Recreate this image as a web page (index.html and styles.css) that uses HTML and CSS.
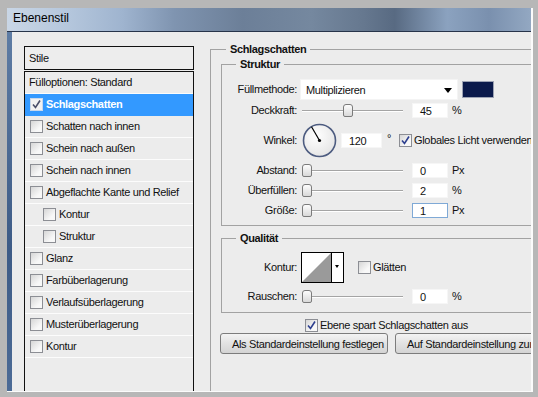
FILE: index.html
```html
<!DOCTYPE html>
<html lang="de">
<head>
  <meta charset="UTF-8" />
  <title>Ebenenstil</title>
  <link rel="stylesheet" href="styles.css">
</head>
<body>
<div class="fenster">
  <div class="titel">Ebenenstil</div>
  <div class="rahmen">
    <div class="inhalt">

      <div class="stile">
        <div class="stile-kopf">Stile</div>
        <ul class="stile-liste">
          <li class="ohne">Fülloptionen: Standard</li>
          <li class="aktiv"><span class="cb"><svg width="11" height="11" viewBox="0 0 11 11"><path d="M2 5.5 L4.5 8.5 L9 1.5" fill="none" stroke="#4a4f6a" stroke-width="1.6"/></svg></span>Schlagschatten</li>
          <li><span class="cb"></span>Schatten nach innen</li>
          <li><span class="cb"></span>Schein nach außen</li>
          <li><span class="cb"></span>Schein nach innen</li>
          <li><span class="cb"></span>Abgeflachte Kante und Relief</li>
          <li class="unter"><span class="cb"></span>Kontur</li>
          <li class="unter"><span class="cb"></span>Struktur</li>
          <li><span class="cb"></span>Glanz</li>
          <li><span class="cb"></span>Farbüberlagerung</li>
          <li><span class="cb"></span>Verlaufsüberlagerung</li>
          <li><span class="cb"></span>Musterüberlagerung</li>
          <li><span class="cb"></span>Kontur</li>
        </ul>
      </div>

      <div class="optionen">
        <fieldset class="gruppe">
          <legend>Schlagschatten</legend>

          <fieldset class="block struktur">
            <legend>Struktur</legend>

            <div class="zeile z1">
              <label>Füllmethode:</label>
              <div class="auswahl">Multiplizieren<span class="pfeil"></span></div>
              <span class="farbe"></span>
            </div>

            <div class="zeile z2">
              <label>Deckkraft:</label>
              <div class="regler"><span class="knopf" style="left: 41px"></span></div>
              <span class="feld">45</span>
              <span class="einheit">%</span>
            </div>

            <div class="zeile z3">
              <label>Winkel:</label>
              <svg class="rad" width="35" height="35" viewBox="0 0 35 35">
                <defs>
                  <radialGradient id="radfuell" cx="0.4" cy="0.35" r="0.7">
                    <stop offset="0" stop-color="#ffffff"/>
                    <stop offset="1" stop-color="#e4e4e4"/>
                  </radialGradient>
                </defs>
                <circle cx="17.5" cy="17.5" r="16" fill="url(#radfuell)" stroke="#4d5c80" stroke-width="1.6"/>
                <line x1="17.5" y1="17.5" x2="9.5" y2="3.8" stroke="#000" stroke-width="1.2"/>
                <circle cx="17.5" cy="17.5" r="1.6" fill="#000"/>
              </svg>
              <span class="feld breit">120</span>
              <span class="grad">°</span>
              <span class="cb"><svg width="11" height="11" viewBox="0 0 11 11"><path d="M2 5.5 L4.5 8.5 L9 1.5" fill="none" stroke="#2d3f8f" stroke-width="1.6"/></svg></span>
              <span class="cb-text">Globales Licht verwenden</span>
            </div>

            <div class="zeile z4">
              <label>Abstand:</label>
              <div class="regler"><span class="knopf" style="left: 0px"></span></div>
              <span class="feld">0</span>
              <span class="einheit">Px</span>
            </div>

            <div class="zeile z4">
              <label>Überfüllen:</label>
              <div class="regler"><span class="knopf" style="left: 0px"></span></div>
              <span class="feld">2</span>
              <span class="einheit">%</span>
            </div>

            <div class="zeile z4">
              <label>Größe:</label>
              <div class="regler"><span class="knopf" style="left: 0px"></span></div>
              <span class="feld fokus">1</span>
              <span class="einheit">Px</span>
            </div>
          </fieldset>

          <fieldset class="block qualitaet">
            <legend>Qualität</legend>

            <div class="zeile k1">
              <label>Kontur:</label>
              <div class="kontur">
                <svg width="29" height="29" viewBox="0 0 29 29">
                  <rect width="29" height="29" fill="#fff"/>
                  <polygon points="0,29 29,0 29,29" fill="#9a9a9a"/>
                </svg>
                <span class="kontur-pfeil"></span>
              </div>
              <span class="cb"></span>
              <span class="cb-text">Glätten</span>
            </div>

            <div class="zeile k2">
              <label>Rauschen:</label>
              <div class="regler"><span class="knopf" style="left: 0px"></span></div>
              <span class="feld">0</span>
              <span class="einheit">%</span>
            </div>
          </fieldset>

          <div class="aussparen">
            <span class="cb"><svg width="11" height="11" viewBox="0 0 11 11"><path d="M2 5.5 L4.5 8.5 L9 1.5" fill="none" stroke="#2d3f8f" stroke-width="1.6"/></svg></span>
            <span class="cb-text">Ebene spart Schlagschatten aus</span>
          </div>

          <div class="knoepfe">
            <button type="button">Als Standardeinstellung festlegen</button>
            <button type="button">Auf Standardeinstellung zurücksetzen</button>
          </div>
        </fieldset>
      </div>

    </div>
  </div>
</div>
</body>
</html>
```

FILE: styles.css
```css
html, body { margin: 0; padding: 0; }
body {
  width: 538px;
  height: 397px;
  overflow: hidden;
  background: #b7b7b7;
  font-family: "Liberation Sans", Arial, sans-serif;
  font-size: 11px;
  line-height: 13px;
  letter-spacing: -0.35px;
  color: #111;
}

.fenster {
  margin: 8px 5px 0 7px;
  height: 383px;
  display: flex;
  flex-direction: column;
  border-right: 2px solid #fbfbfb;
  border-bottom: 1px solid #fbfbfb;
}
.titel {
  height: 23px;
  line-height: 21px;
  padding-left: 6px;
  font-size: 12px;
  letter-spacing: 0;
  color: #000;
  border-bottom: 1px solid #27344a;
  background: linear-gradient(90deg, #c9d6e6 0%, #b4c6dc 12%, #9fb4cf 22%, #7f94b0 32%, #6c7f98 45%, #75889f 58%, #66788f 68%, #586a82 74%, #8ba2bf 84%, #7a90ae 92%, #93a8c2 100%);
}
.rahmen {
  flex: 1;
  display: flex;
  padding-left: 5px;
  background: linear-gradient(#5e7ca4, #3d5b86 60%, #4c6b96);
  overflow: hidden;
}
.inhalt {
  flex: 1;
  display: flex;
  gap: 16px;
  padding: 11px 0 0 12px;
  background: #ececec;
  overflow: hidden;
}

/* linke Liste */
.stile { width: 170px; flex-shrink: 0; margin-top: 3px; }
.stile-kopf {
  height: 22px;
  line-height: 22px;
  padding-left: 4px;
  border: 1px solid #111;
  background: #ededed;
}
.stile-liste {
  list-style: none;
  margin: 1px 0 0;
  padding: 0;
  height: 340px;
  border: 1px solid #111;
  background: #ececec;
}
.stile-liste li {
  height: 21px;
  display: flex;
  align-items: center;
  padding-left: 5px;
  border-bottom: 1px solid #fcfcfc;
}
.stile-liste li.ohne { padding-left: 4px; }
.stile-liste li.unter { padding-left: 18px; }
.stile-liste li.aktiv {
  background: #3399ff;
  color: #fff;
  font-weight: bold;
  border-bottom-color: #3399ff;
}
.stile-liste .cb { margin-right: 3px; }

.cb {
  width: 11px;
  height: 11px;
  flex-shrink: 0;
  display: inline-block;
  border: 1px solid #8c8e94;
  background: linear-gradient(135deg, #d6d6d6, #f8f8f8 70%);
}
.cb svg { display: block; }
.aktiv .cb { background: #f2f2f2; border-color: #c8d8ec; }

/* rechte Seite */
.optionen { width: 345px; flex-shrink: 0; }
fieldset {
  margin: 0;
  border: 1px solid #a2a2a2;
  min-width: 0;
}
legend {
  font-weight: bold;
  padding: 0 4px;
  line-height: 13px;
}
.gruppe {
  padding: 2px 0 0 10px;
  height: 400px;
  border-right: none;
}
.gruppe > legend { margin-left: 5px; }
.block { padding: 0; border-right: none; }
.block > legend { margin-left: 14px; }

.struktur { padding-top: 8px; padding-bottom: 7px; }
.qualitaet { margin-top: 6px; padding-top: 7px; padding-bottom: 8px; }

.zeile { display: flex; align-items: center; }
.zeile label {
  width: 78px;
  flex-shrink: 0;
  text-align: right;
  padding-right: 3px;
  box-sizing: border-box;
}
.z1 { height: 21px; }
.z2 { height: 15px; margin-top: 3px; }
.z3 { height: 35px; margin-top: 5px; }
.z4 { height: 15px; margin-top: 5px; }
.k1 { height: 31px; }
.k2 { height: 15px; margin-top: 6px; }

.auswahl {
  position: relative;
  width: 158px;
  height: 21px;
  line-height: 21px;
  padding-left: 5px;
  box-sizing: border-box;
  background: #fff;
  border: 1px solid #f4f4f4;
}
.pfeil {
  position: absolute;
  right: 5px;
  top: 8px;
  border-left: 4px solid transparent;
  border-right: 4px solid transparent;
  border-top: 5px solid #000;
}
.farbe {
  width: 30px;
  height: 15px;
  margin-left: 4px;
  background: #0b1a4b;
  border: 1px solid #9da3b4;
}

.regler {
  position: relative;
  width: 101px;
  height: 1px;
  margin-left: 2px;
  background: #a4a4a4;
  box-shadow: 0 1px 0 #fff;
}
.knopf {
  position: absolute;
  top: -6px;
  width: 8px;
  height: 11px;
  border: 1px solid #7b7b7b;
  border-radius: 3px 3px 2px 2px;
  background: linear-gradient(#fdfdfd, #d9d9d9);
}

.feld {
  width: 36px;
  height: 15px;
  line-height: 15px;
  margin-left: 9px;
  padding-left: 7px;
  box-sizing: border-box;
  background: #fff;
  border: 1px solid #f6f6f6;
}
.feld.breit { width: 41px; margin-left: 4px; }
.feld.fokus { border-color: #7fa9d6; }
.einheit { margin-left: 4px; }

.rad { margin-left: 2px; flex-shrink: 0; }
.grad { margin-left: 5px; align-self: flex-start; margin-top: 9px; }
.z3 .cb { margin-left: 8px; }
.cb-text { margin-left: 2px; }

.kontur {
  display: flex;
  margin-left: 1px;
  border: 1px solid #000;
  background: #fff;
}
.kontur svg { display: block; }
.kontur-pfeil {
  position: relative;
  width: 11px;
  border-left: 1px solid #000;
}
.kontur-pfeil::after {
  content: "";
  position: absolute;
  left: 3px;
  top: 12px;
  border-left: 2.5px solid transparent;
  border-right: 2.5px solid transparent;
  border-top: 3px solid #000;
}
.k1 .cb { margin-left: 14px; }

.aussparen {
  display: flex;
  align-items: center;
  height: 13px;
  margin-top: 6px;
  padding-left: 84px;
}
.knoepfe {
  display: flex;
  gap: 7px;
  margin-top: 1px;
  margin-left: -1px;
}
.knoepfe button {
  flex-shrink: 0;
  height: 21px;
  padding: 0 11px;
  font-family: inherit;
  font-size: 11px;
  letter-spacing: -0.35px;
  color: #111;
  border: 1px solid #7c7c7c;
  border-radius: 3px;
  background: linear-gradient(#f3f3f3, #e2e2e2 50%, #d4d4d4);
  white-space: nowrap;
}
.knoepfe button:first-child { width: 168px; }
```
